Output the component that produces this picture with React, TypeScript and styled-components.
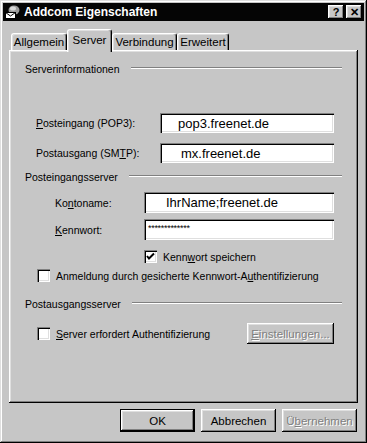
import React from "react";
import styled, { createGlobalStyle } from "styled-components";

const face = "#c6c6c6";
const light = "#dfdfdf";
const shadow = "#808080";

const GlobalStyle = createGlobalStyle`
  html, body {
    margin: 0;
    padding: 0;
    background: ${face};
  }
  body {
    font-family: "Liberation Sans", Arial, sans-serif;
    font-size: 10.5px;
    color: #000;
  }
`;

const Window = styled.div`
  box-sizing: border-box;
  width: 367px;
  height: 443px;
  padding: 3px;
  display: flex;
  flex-direction: column;
  background: ${face};
  box-shadow: inset -1px -1px #000, inset 1px 1px ${light},
    inset -2px -2px ${shadow}, inset 2px 2px #fff;
`;

const TitleBar = styled.div`
  height: 18px;
  display: flex;
  align-items: center;
  padding: 0 2px 0 1px;
  background: #050505;
  color: #fff;
`;

const TitleText = styled.span`
  margin-left: 4px;
  font-weight: bold;
  font-size: 12px;
`;

const TitleButtons = styled.div`
  margin-left: auto;
  display: flex;
  gap: 2px;
`;

const TitleButton = styled.div`
  box-sizing: border-box;
  width: 16px;
  height: 14px;
  display: flex;
  align-items: center;
  justify-content: center;
  background: ${face};
  color: #000;
  font-weight: bold;
  font-size: 11px;
  box-shadow: inset -1px -1px #000, inset 1px 1px #fff,
    inset -2px -2px ${shadow}, inset 2px 2px ${light};
`;

const Body = styled.div`
  flex: 1;
  display: flex;
  flex-direction: column;
  padding: 8px 6px 8px 6px;
`;

const TabRow = styled.div`
  height: 21px;
  display: flex;
  align-items: flex-end;
  padding-left: 2px;
`;

const Tab = styled.div<{ $active?: boolean; $w: number }>`
  box-sizing: border-box;
  width: ${(p) => p.$w}px;
  height: ${(p) => (p.$active ? 23 : 17)}px;
  margin-bottom: ${(p) => (p.$active ? -2 : 0)}px;
  padding-bottom: ${(p) => (p.$active ? 3 : 0)}px;
  position: relative;
  z-index: ${(p) => (p.$active ? 1 : 0)};
  display: flex;
  align-items: center;
  justify-content: center;
  background: ${face};
  border-top: 1px solid #fff;
  border-left: 1px solid #fff;
  border-right: 1px solid #000;
  border-radius: 3px 3px 0 0;
  box-shadow: inset -1px 0 ${shadow}, inset 1px 1px ${light};
  font-size: 11.5px;
`;

const Panel = styled.div`
  flex: 1;
  display: flex;
  flex-direction: column;
  padding: 12px 16px 0 16px;
  background: ${face};
  box-shadow: inset -1px -1px #000, inset 1px 1px #fff,
    inset -2px -2px ${shadow}, inset 2px 2px ${light};
`;

const Heading = styled.div<{ $top: number }>`
  height: 14px;
  margin-top: ${(p) => p.$top}px;
  display: flex;
  align-items: center;
  gap: 11px;
  white-space: nowrap;
`;

const Etch = styled.div`
  flex: 1;
  margin-top: -3px;
  border-top: 1px solid ${shadow};
  border-bottom: 1px solid #fff;
`;

const Row = styled.div<{ $top: number; $indent: number }>`
  display: flex;
  align-items: center;
  margin-top: ${(p) => p.$top}px;
  padding-left: ${(p) => p.$indent}px;
  padding-right: 8px;
`;

const Label = styled.label`
  flex: 1;
  white-space: nowrap;
`;

const Field = styled.div<{ $w: number; $h: number; $pad: number }>`
  box-sizing: border-box;
  width: ${(p) => p.$w}px;
  height: ${(p) => p.$h}px;
  padding-left: ${(p) => p.$pad}px;
  display: flex;
  align-items: center;
  background: #fff;
  font-size: 13px;
  box-shadow: inset 1px 1px ${shadow}, inset 2px 2px #000,
    inset -1px -1px #fff, inset -2px -2px ${light};
`;

const Masked = styled.span`
  font-size: 9px;
  letter-spacing: -0.3px;
  align-self: flex-start;
  margin-top: 4px;
`;

const CheckRow = styled.div<{ $top: number; $indent: number }>`
  display: flex;
  align-items: center;
  gap: 6px;
  margin-top: ${(p) => p.$top}px;
  padding-left: ${(p) => p.$indent}px;
  padding-right: 8px;
  white-space: nowrap;
`;

const Box = styled.div`
  box-sizing: border-box;
  width: 13px;
  height: 13px;
  flex-shrink: 0;
  display: flex;
  align-items: center;
  justify-content: center;
  background: #fff;
  box-shadow: inset 1px 1px ${shadow}, inset 2px 2px #000,
    inset -1px -1px #fff, inset -2px -2px ${light};
`;

const Button = styled.div<{ $w: number; $h: number; $disabled?: boolean; $default?: boolean }>`
  box-sizing: border-box;
  width: ${(p) => p.$w}px;
  height: ${(p) => p.$h}px;
  display: flex;
  align-items: center;
  justify-content: center;
  background: ${face};
  font-size: 11.5px;
  color: ${(p) => (p.$disabled ? shadow : "#000")};
  text-shadow: ${(p) => (p.$disabled ? "1px 1px #fff" : "none")};
  border: ${(p) => (p.$default ? "1px solid #000" : "none")};
  box-shadow: inset -1px -1px #000, inset 1px 1px #fff,
    inset -2px -2px ${shadow}, inset 2px 2px ${light};
`;

const PushRight = styled.div`
  margin-left: auto;
`;

const ButtonRow = styled.div`
  margin-top: 6px;
  display: flex;
  justify-content: flex-end;
  gap: 6px;
  padding-right: 1px;
`;

const MailIcon = () => (
  <svg width="16" height="16" viewBox="0 0 16 16">
    <ellipse cx="10" cy="6" rx="5.5" ry="4.5" fill="#9c9c9c" />
    <ellipse cx="9" cy="4.5" rx="3" ry="2" fill="#d8d8d8" />
    <rect x="1.5" y="8.5" width="10" height="6" fill="#fff" stroke="#000" />
    <polyline points="1.5,8.5 6.5,12 11.5,8.5" fill="none" stroke="#000" />
  </svg>
);

const Check = () => (
  <svg width="9" height="9" viewBox="0 0 9 9">
    <polyline points="1,4 3,6.5 8,1.5" fill="none" stroke="#000" strokeWidth="2" />
  </svg>
);

const App = () => {
  return (
    <>
      <GlobalStyle />
      <Window>
        <TitleBar>
          <MailIcon />
          <TitleText>Addcom Eigenschaften</TitleText>
          <TitleButtons>
            <TitleButton>?</TitleButton>
            <TitleButton>✕</TitleButton>
          </TitleButtons>
        </TitleBar>
        <Body>
          <TabRow>
            <Tab $w={56}>Allgemein</Tab>
            <Tab $w={45} $active>
              Server
            </Tab>
            <Tab $w={65}>Verbindung</Tab>
            <Tab $w={52}>Erweitert</Tab>
          </TabRow>
          <Panel>
            <Heading $top={0}>
              Serverinformationen
              <Etch />
            </Heading>
            <Row $top={37} $indent={11}>
              <Label>
                <u>P</u>osteingang (POP3):
              </Label>
              <Field $w={174} $h={20} $pad={18}>
                pop3.freenet.de
              </Field>
            </Row>
            <Row $top={10} $indent={11}>
              <Label>
                Postausgang (SM<u>T</u>P):
              </Label>
              <Field $w={174} $h={20} $pad={21}>
                mx.freenet.de
              </Field>
            </Row>
            <Heading $top={7}>
              Posteingangsserver
              <Etch />
            </Heading>
            <Row $top={8} $indent={30}>
              <Label>
                Ko<u>n</u>toname:
              </Label>
              <Field $w={190} $h={21} $pad={22}>
                IhrName;freenet.de
              </Field>
            </Row>
            <Row $top={6} $indent={30}>
              <Label>
                <u>K</u>ennwort:
              </Label>
              <Field $w={190} $h={21} $pad={4}>
                <Masked>*************</Masked>
              </Field>
            </Row>
            <CheckRow $top={10} $indent={119}>
              <Box>
                <Check />
              </Box>
              <span>
                Kenn<u>w</u>ort speichern
              </span>
            </CheckRow>
            <CheckRow $top={6} $indent={12}>
              <Box />
              <span>
                Anmeldung durch gesicherte Kennwort-A<u>u</u>thentifizierung
              </span>
            </CheckRow>
            <Heading $top={15}>
              Postausgangsserver
              <Etch />
            </Heading>
            <CheckRow $top={12} $indent={12}>
              <Box />
              <span>
                <u>S</u>erver erfordert Authentifizierung
              </span>
              <PushRight>
                <Button $w={87} $h={21} $disabled>
                  <u>E</u>instellungen...
                </Button>
              </PushRight>
            </CheckRow>
          </Panel>
          <ButtonRow>
            <Button $w={75} $h={23} $default>
              OK
            </Button>
            <Button $w={75} $h={23}>
              Abbrechen
            </Button>
            <Button $w={75} $h={23} $disabled>
              Ü<u>b</u>ernehmen
            </Button>
          </ButtonRow>
        </Body>
      </Window>
    </>
  );
};

export default App;
